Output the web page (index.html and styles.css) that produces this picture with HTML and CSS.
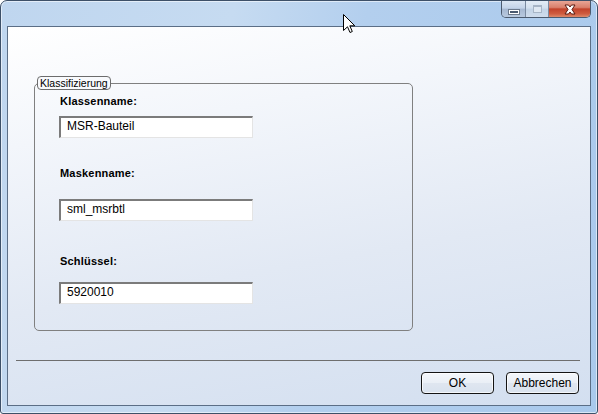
FILE: index.html
```html
<!DOCTYPE html>
<html>
<head>
<meta charset="utf-8">
<link rel="stylesheet" href="styles.css">
</head>
<body>
<div class="window">
  <div class="titlebar">
    <div class="caption-buttons">
      <div class="cbtn cbtn-min"><span class="min-glyph"></span></div>
      <div class="cbtn cbtn-max"><span class="max-glyph"></span></div>
      <div class="cbtn cbtn-close">
        <svg width="14" height="11" viewBox="0 0 14 11">
          <path d="M2 1 L5.5 1 L7 3 L8.5 1 L12 1 L9 5.5 L12 10 L8.5 10 L7 8 L5.5 10 L2 10 L5 5.5 Z" fill="#ffffff" stroke="#5a1a10" stroke-width="1" stroke-linejoin="round"/>
        </svg>
      </div>
    </div>
  </div>
  <div class="client">
    <fieldset class="group">
      <legend class="group-legend">Klassifizierung</legend>
      <div class="group-body">
        <div class="label label-1">Klassenname:</div>
        <div class="field field-1">MSR-Bauteil</div>
        <div class="label label-2">Maskenname:</div>
        <div class="field field-2">sml_msrbtl</div>
        <div class="label label-3">Schlüssel:</div>
        <div class="field field-3">5920010</div>
      </div>
    </fieldset>
    <div class="separator"></div>
    <div class="buttons">
      <div class="btn">OK</div>
      <div class="btn">Abbrechen</div>
    </div>
  </div>
  <svg class="cursor" width="13" height="21" viewBox="0 0 13 21">
    <path d="M0.5 0.5 L0.5 16.5 L4.5 12.8 L7 18.5 L9.3 17.5 L6.8 11.8 L11.8 11.8 Z" fill="#ffffff" stroke="#000000" stroke-width="1" stroke-linejoin="miter"/>
  </svg>
</div>
</body>
</html>
```

FILE: styles.css
```css
* { box-sizing: border-box; }

html, body {
  margin: 0;
  padding: 0;
  width: 598px;
  height: 414px;
  overflow: hidden;
  background: #ffffff;
  font-family: "Liberation Sans", Arial, sans-serif;
}

.window {
  position: relative;
  width: 598px;
  height: 414px;
  border: 1px solid #3d5068;
  border-radius: 7px 7px 3px 3px;
  padding: 0 6px 7px 6px;
  background: linear-gradient(100deg, #bfd6ef 0%, #c6dbf1 35%, #b3cfee 55%, #a9c9ec 100%);
  box-shadow: inset 0 0 0 1px rgba(255,255,255,0.55);
  display: flex;
  flex-direction: column;
}

.titlebar {
  height: 25px;
  display: flex;
  justify-content: flex-end;
  align-items: flex-start;
}

.caption-buttons {
  display: flex;
  height: 17px;
  border: 1px solid #4b5a6e;
  border-top: none;
  border-radius: 0 0 5px 5px;
  overflow: hidden;
}

.cbtn {
  height: 16px;
  display: flex;
  align-items: center;
  justify-content: center;
}

.cbtn-min {
  width: 24px;
  background: linear-gradient(#dbe6f3 0%, #c3d3e8 45%, #a6b8d1 50%, #b8c9df 100%);
  border-right: 1px solid #7a8aa0;
  align-items: flex-end;
  padding-bottom: 3px;
}

.min-glyph {
  width: 10px;
  height: 4px;
  background: #4a5a70;
  border: 1px solid #ffffff;
  box-shadow: 0 0 0 1px #6c7a8c;
}

.cbtn-max {
  width: 23px;
  background: linear-gradient(#e3ecf6 0%, #d3e0ee 45%, #c2d3e6 50%, #cfdcec 100%);
  border-right: 1px solid #7a8aa0;
}

.max-glyph {
  width: 9px;
  height: 8px;
  border: 1px solid #a7b5c6;
  border-top-width: 2px;
  background: #dfe8f2;
}

.cbtn-close {
  width: 41px;
  background: linear-gradient(#e8a595 0%, #d9806c 40%, #c2432b 50%, #cf5c3f 80%, #de8a6a 100%);
}

.client {
  height: 380px;
  border: 1px solid #5b6e86;
  background: linear-gradient(170deg, #ffffff 0%, #f3f6fb 25%, #e2e9f4 60%, #d3dff0 100%);
  display: flex;
  flex-direction: column;
}

.group {
  margin: 49px 0 0 26px;
  padding: 0;
  width: 379px;
  min-width: 0;
  border: 1px solid #808080;
  border-radius: 5px;
}

.group-legend {
  margin-left: 2px;
  padding: 0 2px;
  height: 14px;
  line-height: 12px;
  font-size: 10.5px;
  color: #000000;
  border: 1px solid #6c6c6c;
  border-radius: 4px;
  background: transparent;
}

.group-body {
  padding: 0 0 26px 24px;
  display: flex;
  flex-direction: column;
  align-items: flex-start;
}

.label {
  padding-left: 1px;
  font-size: 11px;
  font-weight: bold;
  letter-spacing: 0.2px;
  line-height: 13px;
  height: 13px;
  color: #000000;
}

.label-1 { margin-top: 5px; }
.label-2 { margin-top: 29px; }
.label-3 { margin-top: 34px; }

.field {
  width: 194px;
  height: 22px;
  background: #ffffff;
  border-top: 2px solid #7b7b7b;
  border-left: 2px solid #7b7b7b;
  border-right: 1px solid #e4e4e4;
  border-bottom: 1px solid #e4e4e4;
  padding: 1px 0 0 6px;
  font-size: 12px;
  line-height: 14px;
  color: #000000;
}

.field-1 { margin-top: 8px; }
.field-2 { margin-top: 19px; }
.field-3 { margin-top: 14px; }

.separator {
  margin: 29px 10px 0 8px;
  height: 1px;
  background: #6e6e6e;
}

.buttons {
  margin: 11px 11px 0 0;
  display: flex;
  justify-content: flex-end;
  gap: 12px;
}

.btn {
  width: 73px;
  height: 22px;
  border: 1px solid #141414;
  border-radius: 4px;
  background: linear-gradient(#f4f7fb 0%, #eaeff6 48%, #dfe6f0 52%, #d9e2ee 100%);
  box-shadow: inset 0 0 0 1px rgba(255,255,255,0.7);
  display: flex;
  align-items: center;
  justify-content: center;
  font-size: 12px;
  color: #000000;
}

.cursor {
  position: absolute;
  left: 342px;
  top: 13px;
}
```
